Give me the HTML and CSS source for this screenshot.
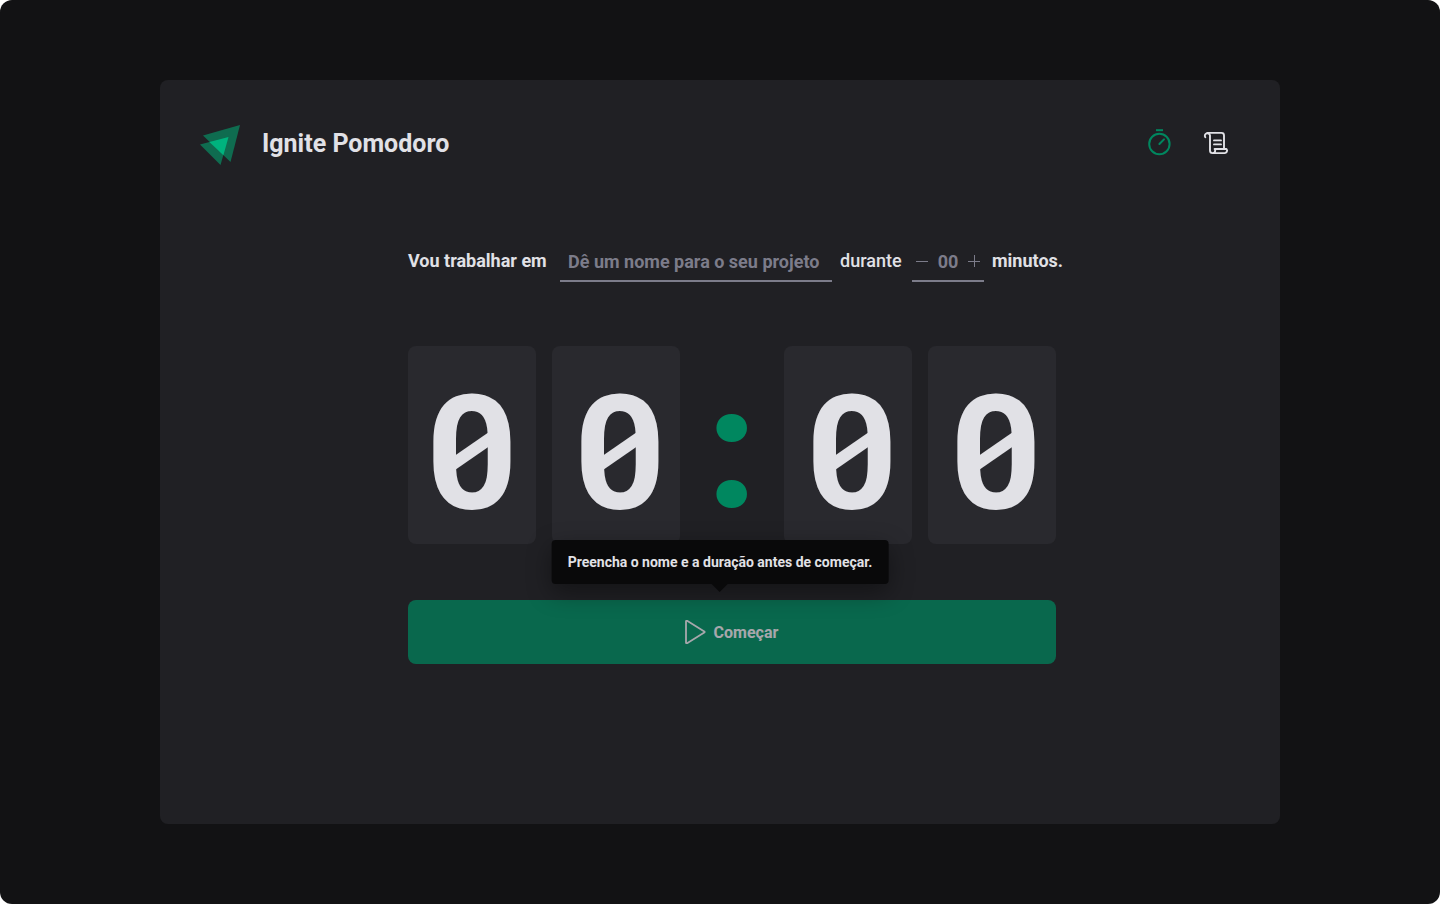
FILE: index.html
```html
<!DOCTYPE html>
<html lang="pt-BR">
<head>
<meta charset="utf-8">
<meta name="viewport" content="width=device-width, initial-scale=1">
<title>Ignite Pomodoro</title>
<link rel="stylesheet" href="styles.css">
</head>
<body>
<div class="page">
  <div class="card">
    <header class="header">
      <div class="brand">
        <svg class="brand-logo" viewBox="0 0 40 40" aria-hidden="true">
          <path fill="#0f6c50" d="M3 10.5 40 0 30.5 37z"/>
          <path fill="#0f6c50" d="M0 19.5 28.5 12 20.5 40z"/>
          <path fill="#00b37e" d="M9.4 17 28.5 12 23.4 30.2z"/>
        </svg>
        <h1 class="brand-name">Ignite Pomodoro</h1>
      </div>
      <nav class="nav">
        <a class="nav-link nav-link-active" href="#timer" aria-label="Timer">
          <svg viewBox="0 0 32 32" fill="none" stroke="currentColor" stroke-width="2"><circle cx="15.400" cy="16" r="10.200"/><path d="M15.400 16l4.600-4.600" stroke-linecap="round"/><path d="M12 2.200h7"/></svg>
        </a>
        <a class="nav-link" href="#history" aria-label="Histórico">
          <svg viewBox="0 0 32 32" fill="none" stroke="currentColor" stroke-width="1.9" stroke-linecap="round" stroke-linejoin="round"><path d="M14 12.400h7M14 16.400h7"/><path d="M5.300 9.300A2.600 2.600 0 1 1 10 7.500V22.500a2.600 2.600 0 0 0 5.200 0c0-.9-.6-1.500-.6-1.500H26.500a2.500 2.500 0 0 1-2.200 4.100H12.600"/><path d="M7.400 4.900H21.500a2.500 2.500 0 0 1 2.500 2.500V21"/></svg>
        </a>
      </nav>
    </header>
    <main class="main">
      <form class="form">
        <div class="task">
          <label class="task-label" for="task">Vou trabalhar em</label>
          <input class="task-input" id="task" type="text" placeholder="Dê um nome para o seu projeto">
          <label class="minutes-label" for="minutes">durante</label>
          <div class="stepper">
            <button class="step" type="button" aria-label="Diminuir"><svg viewBox="0 0 16 16" stroke="currentColor"><path d="M2 8.500h12"/></svg></button>
            <input class="minutes-input" id="minutes" type="text" inputmode="numeric" placeholder="00">
            <button class="step" type="button" aria-label="Aumentar"><svg viewBox="0 0 16 16" stroke="currentColor"><path d="M2 8.500h12M8.500 2v12"/></svg></button>
          </div>
          <span class="task-unit">minutos.</span>
        </div>
        <div class="countdown">
          <span class="digit digit-first">0</span>
          <span class="digit">0</span>
          <span class="separator">:</span>
          <span class="digit">0</span>
          <span class="digit">0</span>
        </div>
        <div class="action">
          <button class="start" type="submit" disabled>
            <svg class="start-icon" viewBox="0 0 24 24" fill="none" stroke="currentColor" stroke-width="1.800" stroke-linejoin="round"><path d="M4 1.500v21c0 .7.6 1 1.100.7L22.300 12.600c.5-.3.5-.9 0-1.200L5.100.8c-.5-.3-1.100 0-1.100.7z"/></svg>
            Começar
          </button>
          <div class="tooltip" role="tooltip">Preencha o nome e a duração antes de começar.</div>
        </div>
      </form>
    </main>
  </div>
</div>
</body>
</html>
```
FILE: styles.css
```css
* { box-sizing: border-box; margin: 0; }

html { background: #fff; }

body {
  color: #e1e1e6;
  font-family: Roboto, "Liberation Sans", sans-serif;
  font-size: 18px;
  font-weight: 700;
}

button, input { font: inherit; color: inherit; border: 0; padding: 0; background: none; border-radius: 0; }

svg { display: block; }

.page {
  min-height: 100vh;
  padding: 80px 24px;
  background: #121214;
  border-radius: 12px;
  display: flex;
  justify-content: center;
}

.card {
  flex: 1;
  max-width: 1120px;
  padding: 40px;
  background: #202024;
  border-radius: 8px;
}

.header { display: flex; align-items: center; justify-content: space-between; padding-right: 8px; height: 48px; }
.brand { display: flex; align-items: flex-end; gap: 22px; height: 42px; }
.brand-logo { width: 40px; height: 40px; }
.brand-name { font-size: 25px; line-height: 42px; }
.nav { display: flex; gap: 24px; }
.nav-link { width: 32px; height: 32px; color: #e1e1e6; }
.nav-link-active { color: #00875f; }

.main { padding: 74px 0 0 24px; }

.form { max-width: 648px; margin: 0 auto; }

.task { display: flex; align-items: center; gap: 8px; white-space: nowrap; line-height: 24px; }
.task-label, .minutes-label, .task-unit { flex: none; padding-bottom: 2px; }
.task-label { width: 144px; }
.task-input {
  flex: none;
  width: 272px;
  height: 40px;
  padding: 0 8px;
  border-bottom: 2px solid #7c7c8a;
}
.task-input::placeholder, .minutes-input::placeholder { color: #7c7c8a; opacity: 1; }
.minutes-label { width: 64px; font-weight: 500; }
.stepper {
  flex: none;
  display: flex;
  align-items: center;
  width: 72px;
  height: 40px;
  border-bottom: 2px solid #7c7c8a;
  color: #7c7c8a;
}
.step { flex: none; width: 20px; height: 16px; display: flex; justify-content: center; }
.step svg { width: 16px; height: 16px; }
.minutes-input { width: 32px; height: 38px; text-align: center; }

.countdown { display: grid; grid-template-columns: 1fr 1fr 72px 1fr 1fr; gap: 16px; margin-top: 64px; }
.digit, .separator { font-size: 160px; line-height: 180px; text-align: center; }
.digit {
  --shift: 4px;
  position: relative;
  padding: 18px 0 0 calc(2 * var(--shift));
  background: #29292e;
  border-radius: 8px;
}
.digit-first { --shift: 0px; }
/* slash through the zero */
.digit::after {
  content: "";
  position: absolute;
  left: calc(50% - 17px + var(--shift));
  top: 86px;
  width: 34px;
  height: 38px;
  background: #e1e1e6;
  clip-path: polygon(0 62%, 100% 0, 100% 38%, 0 100%);
}
.separator { padding-top: 14px; color: #00875f; font-size: 168px; font-weight: 900; }

.action { position: relative; margin-top: 56px; }
.start {
  width: 100%;
  height: 64px;
  padding-right: 4px;
  display: flex;
  align-items: center;
  justify-content: center;
  gap: 8px;
  background: #00875f;
  border-radius: 8px;
  font-size: 16px;
  opacity: 0.7;
}
.start-icon { width: 24px; height: 24px; }

.tooltip {
  position: absolute;
  left: calc(50% - 12px);
  bottom: 80px;
  transform: translateX(-50%);
  padding: 10px 16px;
  background: #09090a;
  border-radius: 4px;
  box-shadow: 0 8px 24px rgba(0, 0, 0, 0.4);
  font-size: 14px;
  line-height: 24px;
  white-space: nowrap;
}
.tooltip::after {
  content: "";
  position: absolute;
  left: calc(50% - 8px);
  top: 100%;
  border: 8px solid transparent;
  border-top-color: #09090a;
  border-bottom: 0;
}
```
